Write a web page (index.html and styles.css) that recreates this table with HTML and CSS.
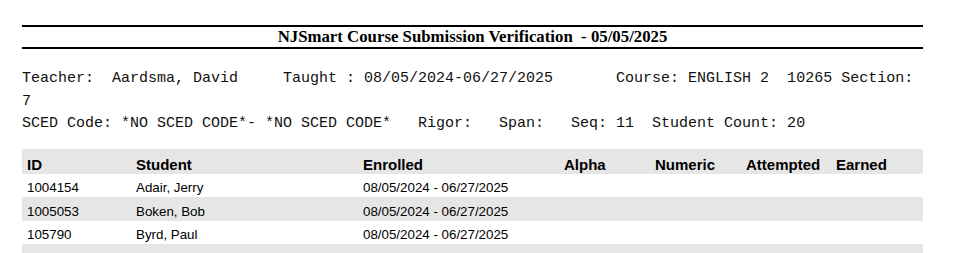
FILE: index.html
```html
<!DOCTYPE html>
<html lang="en">
<head>
<meta charset="utf-8">
<title>NJSmart Course Submission Verification</title>
<link rel="stylesheet" href="styles.css">
</head>
<body>
<div class="page">
  <div class="report-title">NJSmart Course Submission Verification  - 05/05/2025</div>
  <div class="info">
    <div class="info-line">Teacher:  Aardsma, David     Taught : 08/05/2024-06/27/2025       Course: ENGLISH 2  10265 Section: 7</div>
    <div class="info-line">SCED Code: *NO SCED CODE*- *NO SCED CODE*   Rigor:   Span:   Seq: 11  Student Count: 20</div>
  </div>
  <table class="roster">
    <colgroup>
      <col class="c-id"><col class="c-student"><col class="c-enrolled"><col class="c-alpha"><col class="c-numeric"><col class="c-attempted"><col class="c-earned">
    </colgroup>
    <thead>
      <tr><th>ID</th><th>Student</th><th>Enrolled</th><th>Alpha</th><th>Numeric</th><th>Attempted</th><th>Earned</th></tr>
    </thead>
    <tbody>
      <tr><td>1004154</td><td>Adair, Jerry</td><td>08/05/2024 - 06/27/2025</td><td></td><td></td><td></td><td></td></tr>
      <tr><td>1005053</td><td>Boken, Bob</td><td>08/05/2024 - 06/27/2025</td><td></td><td></td><td></td><td></td></tr>
      <tr><td>105790</td><td>Byrd, Paul</td><td>08/05/2024 - 06/27/2025</td><td></td><td></td><td></td><td></td></tr>
      <tr><td>&nbsp;</td><td></td><td></td><td></td><td></td><td></td><td></td></tr>
    </tbody>
  </table>
</div>
</body>
</html>
```
FILE: styles.css
```css
html, body {
  margin: 0;
  padding: 0;
  background: #fff;
  color: #000;
}

.page {
  width: 901px;
  padding: 25px 0 0 22px;
}

.report-title {
  border-top: 2px solid #000;
  border-bottom: 2px solid #000;
  font-family: "Liberation Serif", "Times New Roman", serif;
  font-weight: bold;
  font-size: 16.8px;
  line-height: 20px;
  text-align: center;
  white-space: pre;
}

.info {
  margin-top: 19px;
  font-family: "Liberation Mono", "Courier New", monospace;
  font-size: 15px;
  line-height: 22.5px;
  color: #111;
}

.info-line {
  white-space: pre-wrap;
}

.roster {
  margin-top: 13px;
  width: 901px;
  table-layout: fixed;
  border-collapse: collapse;
  border-spacing: 0;
  font-family: "Liberation Sans", Arial, sans-serif;
}

.c-id { width: 109px; }
.c-student { width: 227px; }
.c-enrolled { width: 201px; }
.c-alpha { width: 91px; }
.c-numeric { width: 91px; }
.c-attempted { width: 90px; }
.c-earned { width: 92px; }

.roster th {
  background: #e6e6e6;
  font-size: 15px;
  font-weight: bold;
  line-height: 17px;
  padding: 7px 5px 1px;
  text-align: left;
  white-space: nowrap;
}

.roster td {
  font-size: 13.33px;
  line-height: 15px;
  padding: 6.5px 5px 2px;
  white-space: nowrap;
}

.roster tbody tr:nth-child(even) {
  background: #e6e6e6;
}
```
